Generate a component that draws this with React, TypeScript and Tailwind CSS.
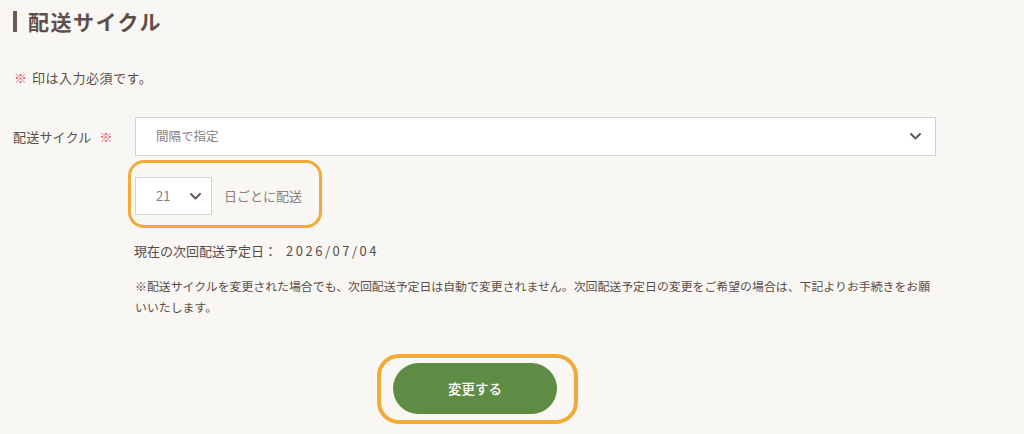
import React from "react";

function Chevron({ className }: { className?: string }) {
  return (
    <svg
      className={className}
      width="11"
      height="7"
      viewBox="0 0 11 7"
      fill="none"
    >
      <path
        d="M1 1l4.5 4.5L10 1"
        stroke="#6a5a55"
        strokeWidth="2"
        strokeLinecap="round"
        strokeLinejoin="round"
      />
    </svg>
  );
}

export default function App() {
  return (
    <div className="w-[1024px] h-[434px] overflow-hidden bg-[#f8f7f3] text-[#5a4d48] font-['Noto_Sans_CJK_JP','Noto_Sans',sans-serif]">
      {/* heading */}
      <div className="mt-[11px] ml-[13px] flex items-center h-[21px]">
        <div className="w-[4px] h-[21px] bg-[#6a5a55]" />
        <h1 className="ml-[11px] text-[21px] font-bold leading-none tracking-[1.5px] text-[#5e4f4a]">
          配送サイクル
        </h1>
      </div>

      <p className="mt-[36px] ml-[14px] text-[13px] leading-[20px] flex">
        <span className="text-[#e0555f]">※</span>
        <span className="ml-[5px] tracking-[0.5px]">印は入力必須です。</span>
      </p>

      {/* cycle select */}
      <div className="mt-[29px] flex items-center">
        <label className="w-[135px] pl-[13px] text-[13px] leading-[20px] flex">
          <span className="tracking-[0.2px]">配送サイクル</span>
          <span className="ml-[8px] text-[#e0555f]">※</span>
        </label>
        <div className="w-[801px] h-[39px] bg-white border border-[#d5d2cf] flex items-center justify-between pl-[20px] pr-[14px]">
          <span className="text-[12.5px] text-[#8a807c]">間隔で指定</span>
          <Chevron />
        </div>
      </div>

      {/* interval */}
      <div className="mt-[21px] ml-[135px] flex">
        <div className="relative flex items-center">
          <div className="absolute -left-[7px] -top-[17px] -bottom-[13px] -right-[20px] border-[3px] border-[#f0aa35] rounded-[16px]" />
          <div className="w-[77px] h-[38px] bg-white border border-[#d5d2cf] flex items-center pl-[20px]">
            <span className="text-[13px] text-[#8a807c] w-[34px]">21</span>
            <Chevron />
          </div>
          <span className="ml-[12px] text-[13px] text-[#8a807c]">
            日ごとに配送
          </span>
        </div>
      </div>

      <p className="mt-[26px] ml-[134px] text-[13px] leading-[20px] flex">
        <span>現在の次回配送予定日：</span>
        <span className="ml-[9px] tracking-[2.5px]">2026/07/04</span>
      </p>

      <p className="mt-[14px] ml-[135px] w-[801px] text-[11.9px] leading-[21px]">
        ※配送サイクルを変更された場合でも、次回配送予定日は自動で変更されません。次回配送予定日の変更をご希望の場合は、下記よりお手続きをお願いいたします。
      </p>

      <div className="mt-[46px] ml-[393px] flex">
        <div className="relative">
          <div className="absolute -left-[16px] -top-[9px] -bottom-[10px] -right-[21px] border-[4px] border-[#f0aa35] rounded-[22px]" />
          <button className="w-[164px] h-[51px] rounded-full bg-[#5f8c45] text-white text-[13.5px] font-medium">
            変更する
          </button>
        </div>
      </div>
    </div>
  );
}
